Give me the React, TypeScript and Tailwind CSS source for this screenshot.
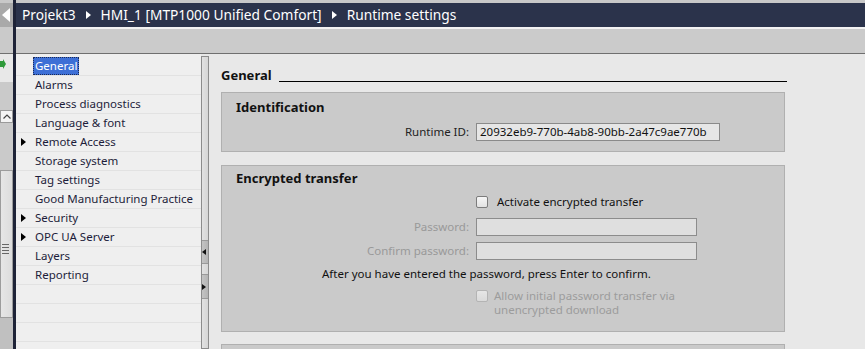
import React from 'react';

const navItems: { label: string; arrow?: boolean; selected?: boolean }[] = [
  { label: 'General', selected: true },
  { label: 'Alarms' },
  { label: 'Process diagnostics' },
  { label: 'Language & font' },
  { label: 'Remote Access', arrow: true },
  { label: 'Storage system' },
  { label: 'Tag settings' },
  { label: 'Good Manufacturing Practice' },
  { label: 'Security', arrow: true },
  { label: 'OPC UA Server', arrow: true },
  { label: 'Layers' },
  { label: 'Reporting' },
  { label: '' },
  { label: '' },
  { label: '' },
];

const Tri: React.FC<{ color: string; dir?: 'right' | 'left'; size?: number }> = ({ color, dir = 'right', size = 4 }) => (
  <svg width={size + 1} height={size * 2} viewBox={`0 0 ${size + 1} ${size * 2}`}>
    {dir === 'right'
      ? <polygon points={`0,0 ${size + 1},${size} 0,${size * 2}`} fill={color} />
      : <polygon points={`${size + 1},0 0,${size} ${size + 1},${size * 2}`} fill={color} />}
  </svg>
);

const Checkbox: React.FC<{ disabled?: boolean }> = ({ disabled }) => (
  <div className={disabled
    ? 'w-[12px] h-[12px] rounded-[2px] border border-[#b4b4b4] bg-gradient-to-b from-[#e6e6e6] to-[#dadada]'
    : 'w-[12px] h-[12px] rounded-[2px] border border-[#7c7c7c] bg-gradient-to-b from-[#f6f6f6] to-[#e2e2e2]'} />
);

const App: React.FC = () => {
  return (
    <div className="w-[865px] h-[349px] flex overflow-hidden bg-[#e8e8e8] text-[11.5px] leading-none" style={{ fontFamily: '"Noto Sans", "Open Sans", sans-serif' }}>
      {/* left collapsed panel */}
      <div className="w-[13px] flex flex-col shrink-0">
        <div className="h-[3px] bg-[#c8c8c8]" />
        <div className="h-[24px] bg-[#a9a9a9] flex items-center pl-[2px]">
          <Tri color="#ffffff" dir="left" size={7} />
        </div>
        <div className="h-[27px] bg-[#cacaca] border-b border-[#707070]" />
        <div className="h-[28px] bg-[#e8e8e8] pt-[5px]">
          <svg width="6" height="12" viewBox="0 0 6 12"><polygon points="0,2 3,2 3,0 6,5 3,10 3,8 0,8" fill="#2f9a3a" /></svg>
        </div>
        <div className="h-[28px] bg-[#cacaca]" />
        <div className="h-[13px] bg-[#f4f4f4] border border-[#9a9a9a] flex items-center justify-center">
          <svg width="8" height="5" viewBox="0 0 8 5"><polyline points="0.5,4.5 4,1 7.5,4.5" fill="none" stroke="#444" strokeWidth="1.2" /></svg>
        </div>
        <div className="h-[47px] bg-[#cacaca]" />
        <div className="h-[148px] bg-gradient-to-r from-[#e6e6e6] to-[#dcdcdc] border border-[#9c9c9c] flex flex-col justify-center">
          <div className="flex flex-col gap-[2px] pl-[1px] w-[8px] mt-[10px]">
            <div className="h-px bg-[#666]" /><div className="h-px bg-[#666]" /><div className="h-px bg-[#666]" /><div className="h-px bg-[#666]" />
          </div>
        </div>
        <div className="flex-1 bg-[#c0c0c0]" />
      </div>
      <div className="w-[3px] bg-[#1e2337] shrink-0" />

      {/* main */}
      <div className="flex-1 flex flex-col min-w-0">
        <div className="h-[3px] bg-[#c8c8c8]" />
        <div className="h-[24px] bg-[#2b334b] flex items-center gap-[10px] pl-[6px] text-white text-[13.75px]">
          <span>Projekt3</span>
          <Tri color="#ffffff" size={4} />
          <span>HMI_1 [MTP1000 Unified Comfort]</span>
          <Tri color="#ffffff" size={4} />
          <span>Runtime settings</span>
        </div>
        <div className="h-[2px] bg-[#f2f2f2]" />
        <div className="h-[25px] bg-[#cbcbcb] border-b border-[#6f6f6f]" />

        <div className="flex-1 flex min-h-0">
          {/* navigation */}
          <div className="w-[185px] bg-[#efefef] pt-[3px] flex flex-col shrink-0 text-[#1d1d3a]">
            {navItems.map((item, i) => (
              <div key={i} className="h-[19px] border-b border-[#e2e2e2] flex items-center">
                <div className="w-[19px] flex justify-end pr-[9px]">
                  {item.arrow && <Tri color="#000000" size={4} />}
                </div>
                {item.selected ? (
                  <span className="bg-[#3d6fd6] text-white px-[1px] py-[2px] border border-dotted border-[#1b2a55] -ml-[2px]">{item.label}</span>
                ) : (
                  <span>{item.label}</span>
                )}
              </div>
            ))}
          </div>

          {/* splitter */}
          <div className="w-[8px] bg-[#e8e8e8] pt-[2px] shrink-0">
            <div className="h-full border border-[#8c8c8c] bg-gradient-to-r from-[#e2e2e2] to-[#d6d6d6] flex flex-col">
              <div className="h-[183px]" />
              <div className="h-[24px] border-y border-[#9a9a9a] bg-gradient-to-r from-[#c4c4c4] to-[#b4b4b4] flex items-center">
                <Tri color="#111111" dir="left" size={3} />
              </div>
              <div className="h-[10px]" />
              <div className="h-[25px] border-y border-[#9a9a9a] bg-gradient-to-r from-[#c4c4c4] to-[#b4b4b4] flex items-center">
                <Tri color="#111111" size={3} />
              </div>
            </div>
          </div>

          {/* content */}
          <div className="flex-1 pl-[12px] pt-[13px] text-[#111]">
            <div className="flex items-end w-[566px] h-[15px]">
              <span className="font-bold text-[13px] text-[#111] leading-none">General</span>
              <div className="flex-1 border-b border-black ml-[7px] mb-[0px]" />
            </div>

            <div className="mt-[10px] w-[564px] h-[60px] bg-[#cacaca] border border-[#b0b0b0]">
              <div className="pl-[14px] pt-[7px] font-bold text-[13px] leading-[14px]">Identification</div>
              <div className="grid grid-cols-[247px_auto] gap-x-[7px] items-center mt-[9px]">
                <span className="text-right text-[#222]">Runtime ID:</span>
                <div className="w-[244px] h-[18px] border border-[#8a8a8a] bg-[#e6e6e6] flex items-center pl-[3px] text-[#111]">20932eb9-770b-4ab8-90bb-2a47c9ae770b</div>
              </div>
            </div>

            <div className="mt-[13px] w-[564px] h-[167px] bg-[#cacaca] border border-[#b0b0b0]">
              <div className="pl-[14px] pt-[5px] font-bold text-[13px] leading-[14px]">Encrypted transfer</div>
              <div className="grid grid-cols-[247px_auto] gap-x-[7px] items-center mt-[11px]">
                <span />
                <div className="flex items-center gap-[9px]">
                  <Checkbox />
                  <span className="text-[#111]">Activate encrypted transfer</span>
                </div>
              </div>
              <div className="grid grid-cols-[247px_auto] gap-x-[7px] gap-y-[6px] items-center mt-[10px]">
                <span className="text-right text-[#999]">Password:</span>
                <div className="w-[221px] h-[18px] border border-[#8c8c8c] bg-[#dfdfdf]" />
                <span className="text-right text-[#999]">Confirm password:</span>
                <div className="w-[221px] h-[18px] border border-[#8c8c8c] bg-[#dfdfdf]" />
              </div>
              <div className="pl-[100px] mt-[8px] text-[#111]">After you have entered the password, press Enter to confirm.</div>
              <div className="grid grid-cols-[247px_auto] gap-x-[7px] mt-[9px]">
                <span />
                <div className="flex items-start gap-[6px]">
                  <div className="mt-[1px]"><Checkbox disabled /></div>
                  <span className="text-[#9c9c9c] leading-[14px]">Allow initial password transfer via<br />unencrypted download</span>
                </div>
              </div>
            </div>

            <div className="mt-[12px] w-[564px] h-[40px] bg-[#cacaca] border border-[#b0b0b0]" />
          </div>
        </div>
      </div>
    </div>
  );
};

export default App;
